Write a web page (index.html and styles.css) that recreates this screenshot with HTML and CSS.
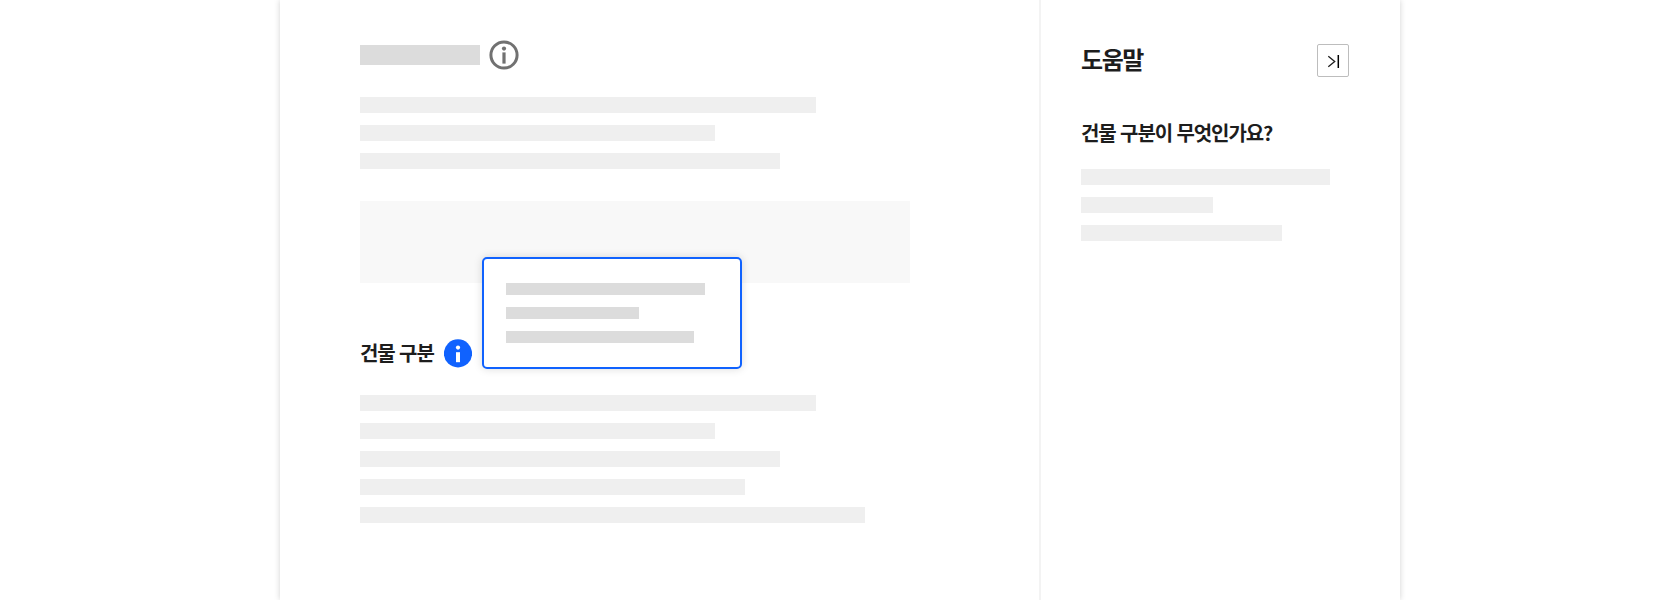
FILE: index.html
```
<!DOCTYPE html>
<html lang="ko">
<head>
<meta charset="utf-8">
<title>도움말</title>
<link rel="stylesheet" href="styles.css">
</head>
<body>
<div class="panel">
  <main class="content">
    <div class="heading">
      <span class="heading-bar"></span>
      <svg class="info-outline" viewBox="0 0 30 30"><circle cx="15" cy="15" r="13.1" fill="none" stroke="#717171" stroke-width="3"/><circle cx="15" cy="8.6" r="2.1" fill="#717171"/><rect x="13.4" y="12.4" width="3.2" height="11.2" fill="#717171"/></svg>
    </div>
    <div class="lines">
      <span class="line w456"></span><span class="line w355"></span><span class="line w420"></span>
    </div>
    <div class="block"></div>
    <div class="field">
      <h2 class="label">건물 구분</h2>
      <div class="info">
        <svg class="info-solid" viewBox="0 0 28 29"><circle cx="14" cy="14.4" r="14.1" fill="#1062fe"/><circle cx="14" cy="8.6" r="2.1" fill="#fff"/><rect x="12" y="13.2" width="4" height="10" fill="#fff"/></svg>
        <div class="tooltip">
          <span class="tip w199"></span><span class="tip w133"></span><span class="tip w188"></span>
        </div>
      </div>
    </div>
    <div class="lines">
      <span class="line w456"></span><span class="line w355"></span><span class="line w420"></span><span class="line w385"></span><span class="line w505"></span>
    </div>
  </main>
  <aside class="help">
    <header class="help-head">
      <h1 class="help-title">도움말</h1>
      <button class="fold" aria-label="접기"><svg class="fold-icon" viewBox="0 0 13 14"><path d="M1.3 2.3l6.4 5.2-6.4 5.2" fill="none" stroke="#1d1d1d" stroke-width="1.3"/><path d="M11.3 1v13" stroke="#000" stroke-width="1.5"/></svg></button>
    </header>
    <h2 class="question">건물 구분이 무엇인가요?</h2>
    <div class="lines">
      <span class="line w249"></span><span class="line w132"></span><span class="line w201"></span>
    </div>
  </aside>
</div>
</body>
</html>
```
FILE: styles.css
```
* { box-sizing: border-box; }
body {
  margin: 0;
  height: 600px;
  overflow: hidden;
  background: #fff;
  color: #1d1d1d;
  font-family: "Noto Sans CJK KR", sans-serif;
}
h1, h2 { margin: 0; font-weight: 700; white-space: nowrap; }
svg { display: block; flex: none; }
.panel {
  display: flex;
  width: 1120px;
  height: 600px;
  margin: 0 auto;
  box-shadow: 0 0 6px rgba(0, 0, 0, .18);
}
.content { width: 759px; padding: 40px 0 0 80px; }
.heading { display: flex; align-items: center; gap: 9px; height: 30px; margin-bottom: 27px; }
.heading-bar { width: 120px; height: 20px; background: #dcdcdc; }
.info-outline { width: 30px; height: 30px; }
.lines { display: flex; flex-direction: column; gap: 12px; }
.line { height: 16px; background: #efefef; }
.block { width: 550px; height: 82px; margin-top: 32px; background: #f8f8f8; }
.field { display: flex; align-items: flex-start; height: 28px; margin: 56px 0 28px; }
.label { width: 84px; font-size: 20px; line-height: 28px; letter-spacing: -1.1px; }
.info { position: relative; }
.info-solid { width: 28px; height: 29px; }
.tooltip {
  position: absolute;
  left: 38px;
  bottom: -1px;
  display: flex;
  flex-direction: column;
  gap: 12px;
  width: 260px;
  height: 112px;
  padding: 24px 22px;
  background: #fff;
  border: 2px solid #1062fe;
  border-radius: 5px;
  box-shadow: 0 0 8px rgba(0, 0, 0, .15);
}
.tip { height: 12px; background: #dcdcdc; }
.help { width: 361px; padding: 44px 51px 0 40px; border-left: 2px solid #f3f3f3; }
.help-head { display: flex; justify-content: space-between; height: 32px; }
.help-title { font-size: 24px; line-height: 30px; letter-spacing: -1.4px; }
.fold {
  display: flex;
  align-items: center;
  justify-content: center;
  width: 32px;
  height: 33px;
  padding: 0;
  background: #fff;
  border: 1px solid #bdbdbd;
  border-radius: 2px;
}
.fold-icon { width: 13px; height: 14px; }
.question { margin: 43px 0 22px; font-size: 20px; line-height: 28px; letter-spacing: -1.1px; }
.w132 { width: 132px; }
.w133 { width: 133px; }
.w188 { width: 188px; }
.w199 { width: 199px; }
.w201 { width: 201px; }
.w249 { width: 249px; }
.w355 { width: 355px; }
.w385 { width: 385px; }
.w420 { width: 420px; }
.w456 { width: 456px; }
.w505 { width: 505px; }
```
